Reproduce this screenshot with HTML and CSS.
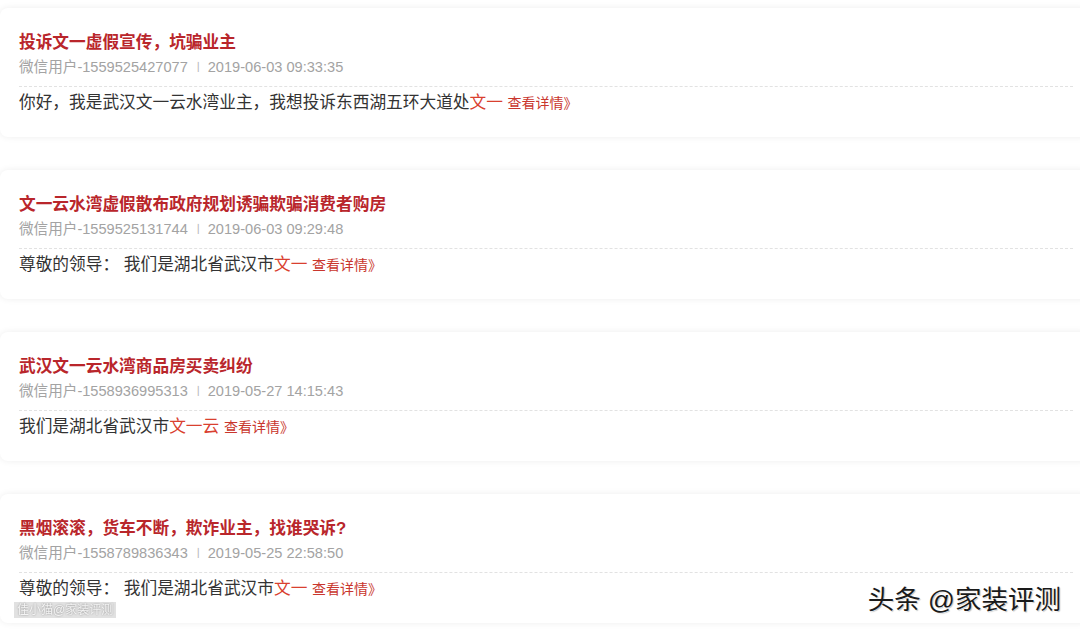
FILE: index.html
```html
<!DOCTYPE html>
<html>
<head>
  <meta charset="utf-8">
  <title>投诉列表</title>
  <link rel="stylesheet" href="styles.css">
</head>
<body>
  <div class="list">
    <div class="card">
      <div class="title">投诉文一虚假宣传，坑骗业主</div>
      <div class="meta">微信用户-1559525427077<span class="sep">丨</span>2019-06-03 09:33:35</div>
      <div class="content">你好，我是武汉文一云水湾业主，我想投诉东西湖五环大道处<span class="hl">文一</span> <span class="more">查看详情》</span></div>
    </div>

    <div class="card">
      <div class="title">文一云水湾虚假散布政府规划诱骗欺骗消费者购房</div>
      <div class="meta">微信用户-1559525131744<span class="sep">丨</span>2019-06-03 09:29:48</div>
      <div class="content">尊敬的领导： 我们是湖北省武汉市<span class="hl">文一</span> <span class="more">查看详情》</span></div>
    </div>

    <div class="card">
      <div class="title">武汉文一云水湾商品房买卖纠纷</div>
      <div class="meta">微信用户-1558936995313<span class="sep">丨</span>2019-05-27 14:15:43</div>
      <div class="content">我们是湖北省武汉市<span class="hl">文一云</span> <span class="more">查看详情》</span></div>
    </div>

    <div class="card">
      <div class="title">黑烟滚滚，货车不断，欺诈业主，找谁哭诉?</div>
      <div class="meta">微信用户-1558789836343<span class="sep">丨</span>2019-05-25 22:58:50</div>
      <div class="content">尊敬的领导： 我们是湖北省武汉市<span class="hl">文一</span> <span class="more">查看详情》</span></div>
    </div>
  </div>

  <div class="mark-left">佳小猫@家装评测</div>
  <div class="mark-right">头条 @家装评测</div>
</body>
</html>
```

FILE: styles.css
```css
body {
    margin: 0;
    background: #fff;
    font-family: "Liberation Sans", "Noto Sans CJK SC", sans-serif;
    overflow: hidden;
    width: 1080px;
    height: 634px;
    position: relative;
}

.list {
    padding-top: 8px;
    width: 1092px;
    display: flex;
    flex-direction: column;
    gap: 33px;
}

.card {
    height: 129px;
    box-sizing: border-box;
    padding: 25px 19px 0;
    background: #fff;
    border-radius: 8px;
    box-shadow: 0 0 7px rgba(0, 0, 0, 0.07);
}

.title {
    font-size: 16.7px;
    line-height: 20px;
    font-weight: bold;
    color: #b9262b;
    margin-bottom: 5px;
}

.meta {
    font-size: 14.6px;
    line-height: 18px;
    color: #a3a3a3;
    padding-bottom: 10px;
    border-bottom: 1px dashed #e2e2e2;
}

.sep {
    display: inline-block;
    margin: 0 4px 0 5px;
    font-size: 11px;
    color: #b5b5b5;
    vertical-align: 1px;
}

.content {
    margin-top: 6px;
    font-size: 16.7px;
    line-height: 20px;
    color: #333;
}

.hl {
    color: #d9402f;
}

.more {
    font-size: 14px;
    color: #c9362d;
}

.mark-left {
    position: absolute;
    left: 14px;
    top: 602px;
    padding: 0 3px;
    font-size: 12px;
    line-height: 16px;
    color: #f4f4f4;
    background: rgba(170, 170, 170, 0.35);
    text-shadow: 0 0 2px #888;
    filter: blur(0.6px);
}

.mark-right {
    position: absolute;
    right: 19px;
    top: 584px;
    font-size: 26.5px;
    line-height: 32px;
    color: #1a1a1a;
    text-shadow: -1px 1px 1px rgba(255, 255, 255, 0.95), 1px 1px 1px rgba(0, 0, 0, 0.25);
}
```
